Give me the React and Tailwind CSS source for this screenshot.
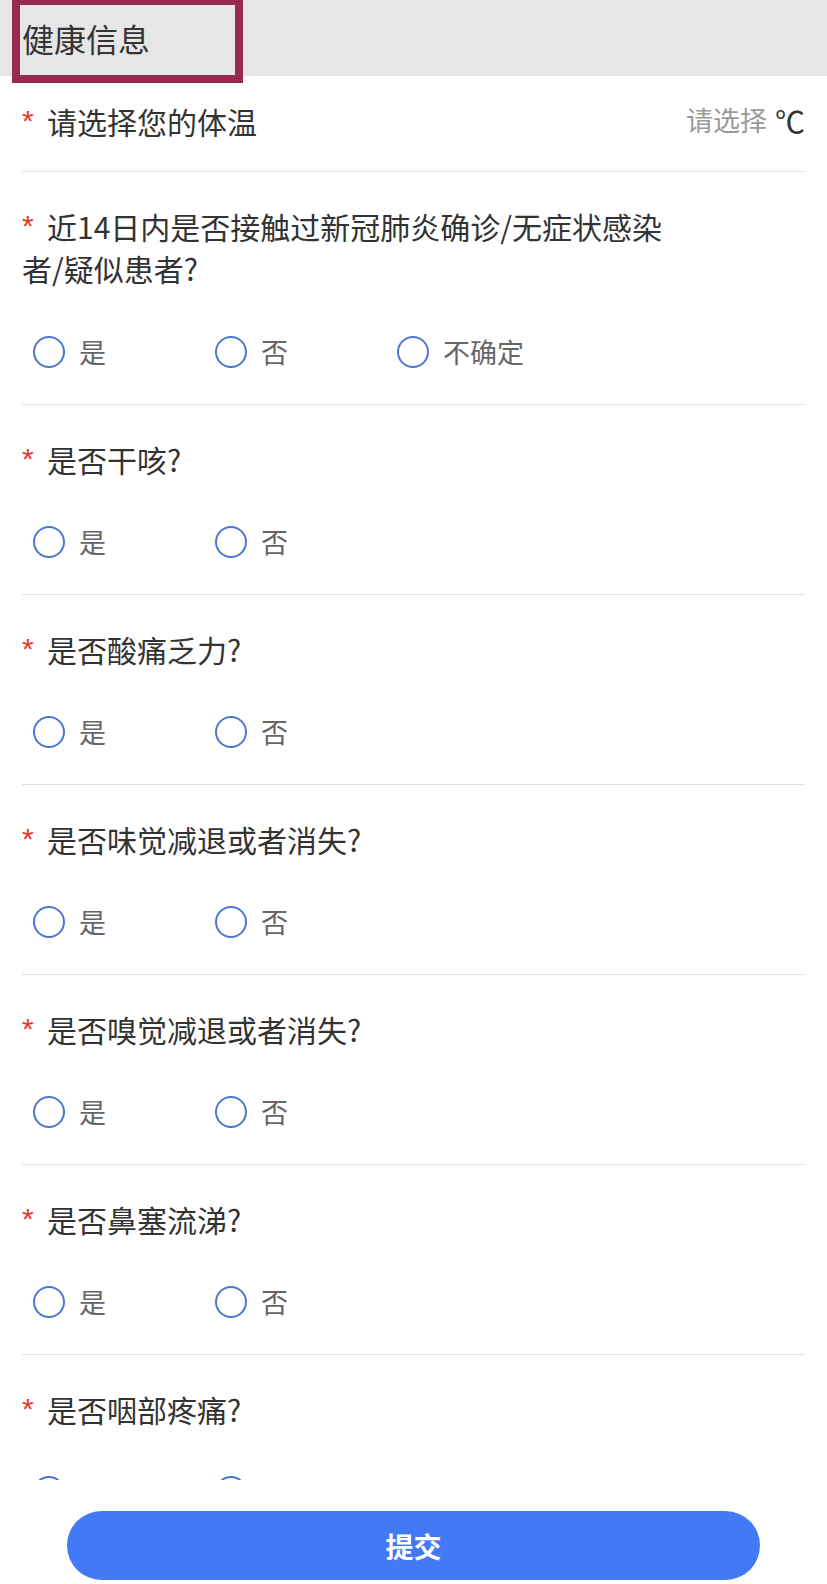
const font = { fontFamily: '"Noto Sans CJK SC", "Noto Sans", sans-serif' };

const questions = [
  { title: '是否干咳?', options: ['是', '否'] },
  { title: '是否酸痛乏力?', options: ['是', '否'] },
  { title: '是否味觉减退或者消失?', options: ['是', '否'] },
  { title: '是否嗅觉减退或者消失?', options: ['是', '否'] },
  { title: '是否鼻塞流涕?', options: ['是', '否'] },
  { title: '是否咽部疼痛?', options: ['是', '否'] },
];

function Star() {
  return (
    <span className="w-[25px] shrink-0 text-[#e5392f] text-[30px] leading-[42px]" style={{ fontFamily: '"Liberation Sans", sans-serif' }}>
      *
    </span>
  );
}

function Radio({ label }) {
  return (
    <div className="w-[182px] flex items-center gap-[14px]">
      <span className="w-[32px] h-[32px] rounded-full border-2 border-[#4a77cf] shrink-0" />
      <span className="text-[27px] leading-[32px] text-[#666]">{label}</span>
    </div>
  );
}

function Question({ title, options, lines }) {
  return (
    <div className="pt-[33px] pb-[36px] border-b border-[#e3e3e3]">
      <div className="flex text-[30px] leading-[42px] text-[#333]">
        <Star />
        <span>{title}</span>
      </div>
      {lines && <div className="text-[30px] leading-[43px] text-[#333]">{lines}</div>}
      <div className="flex pl-[11px] mt-[46px]">
        {options.map((o) => (
          <Radio key={o} label={o} />
        ))}
      </div>
    </div>
  );
}

export default function App() {
  return (
    <div className="w-full h-[1584px] flex flex-col bg-white" style={font}>
      <div className="relative h-[76px] shrink-0 bg-[#e6e6e6] flex items-center px-[22px]">
        <span className="text-[32px] text-[#333] -mt-[1px]">健康信息</span>
        <div className="absolute left-[12px] -top-[3px] w-[231px] h-[86px] border-[8px] border-[#98294f]" />
      </div>

      <div className="flex-1 overflow-hidden px-[22px]">
        <div className="flex items-center justify-between pt-[22px] pb-[28px] border-b border-[#e3e3e3]">
          <div className="flex text-[30px] leading-[42px] text-[#333]">
            <Star />
            <span>请选择您的体温</span>
          </div>
          <div className="flex items-center gap-[8px]">
            <span className="text-[27px] text-[#9a9a9a]">请选择</span>
            <span className="text-[30px] text-[#333]">℃</span>
          </div>
        </div>

        <Question
          title="近14日内是否接触过新冠肺炎确诊/无症状感染"
          lines="者/疑似患者?"
          options={['是', '否', '不确定']}
        />

        {questions.map((q) => (
          <Question key={q.title} title={q.title} options={q.options} />
        ))}
      </div>

      <div className="h-[104px] shrink-0 flex justify-center pt-[31px] bg-white">
        <button className="w-[693px] h-[69px] rounded-full bg-[#4279f6] text-white text-[28px] font-bold">
          提交
        </button>
      </div>
    </div>
  );
}
